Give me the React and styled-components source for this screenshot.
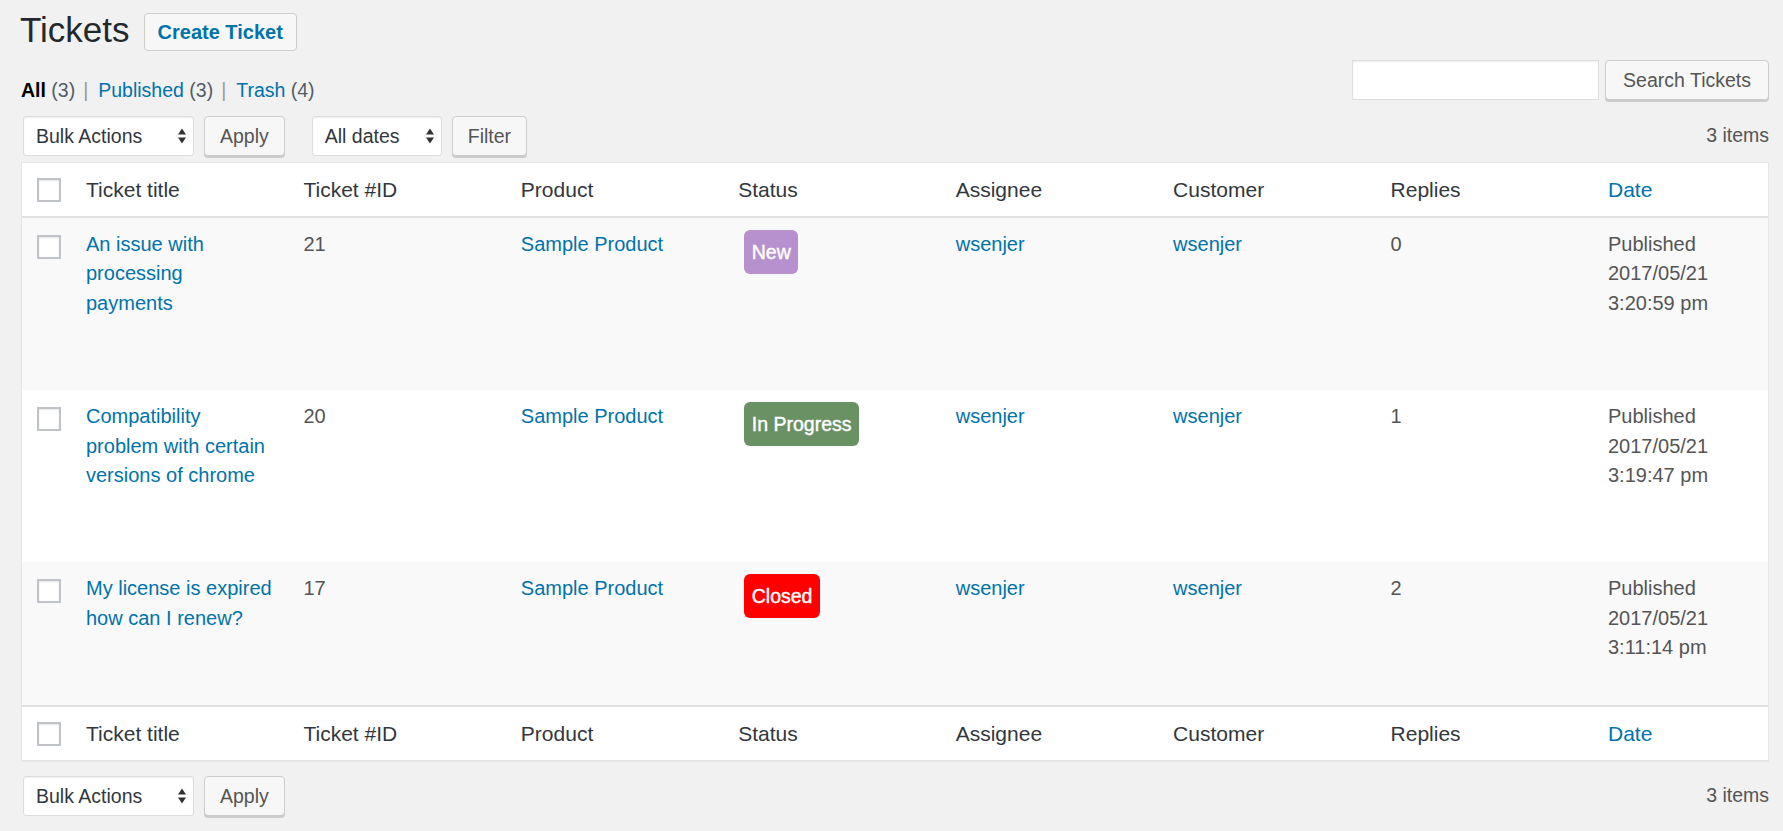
import React from "react";
import styled, { createGlobalStyle } from "styled-components";

const Global = createGlobalStyle`
  *, *::before, *::after { box-sizing: border-box; }
  html, body { margin: 0; padding: 0; }
  body {
    background: #f1f1f1;
    font-family: "Liberation Sans", Arial, Helvetica, sans-serif;
    color: #444;
  }
`;

const Page = styled.div`
  padding: 0 14px 20px 21px;
`;

const TitleRow = styled.div`
  display: flex;
  align-items: flex-start;
`;

const Heading = styled.h1`
  margin: 8px 14px 0 -1px;
  font-size: 35px;
  line-height: 44px;
  font-weight: 400;
  color: #23282d;
`;

const TitleAction = styled.a`
  margin-top: 13px;
  height: 38px;
  padding: 0 13px;
  display: inline-flex;
  align-items: center;
  border: 1px solid #ccc;
  border-radius: 4px;
  background: #f7f7f7;
  color: #0073aa;
  font-size: 20px;
  font-weight: 700;
  text-decoration: none;
`;

const SubRow = styled.div`
  display: flex;
  justify-content: space-between;
  align-items: flex-start;
`;

const Views = styled.ul`
  list-style: none;
  margin: 24px 0 0 0;
  padding: 0;
  display: flex;
  font-size: 19.5px;
  line-height: 28px;
  color: #555d66;
`;

const ViewItem = styled.li`
  display: flex;
  white-space: pre;
`;

const ViewLink = styled.a`
  color: ${(p) => (p.$current ? "#000" : "#0073aa")};
  font-weight: ${(p) => (p.$current ? 700 : 400)};
  text-decoration: none;
`;

const ViewCount = styled.span`
  color: #555d66;
`;

const Sep = styled.span`
  margin: 0 10px 0 8px;
  color: #999;
`;

const SearchBox = styled.div`
  margin-top: 8px;
  display: flex;
  gap: 6px;
`;

const SearchInput = styled.input`
  width: 247px;
  height: 40px;
  border: 1px solid #ddd;
  border-radius: 0;
  background: #fff;
  box-shadow: inset 0 1px 2px rgba(0, 0, 0, 0.07);
  font-size: 19.5px;
  font-family: inherit;
  outline: none;
`;

const Button = styled.button`
  height: 40px;
  padding: 0 ${(p) => p.$px || 15}px;
  border: 1px solid #ccc;
  border-radius: 4px;
  background: #f7f7f7;
  box-shadow: 0 2px 0 #ccc;
  color: #555;
  font-family: inherit;
  font-size: 19.5px;
  line-height: 38px;
  cursor: pointer;
`;

const TableNav = styled.div`
  display: flex;
  align-items: flex-start;
  padding-left: 2px;
  margin: ${(p) => (p.$top ? "12px 0 5px" : "15px 0 0")};
  height: 41px;
`;

const Actions = styled.div`
  display: flex;
  gap: 10px;
  margin-right: 27px;
`;

const SelectBox = styled.div`
  width: ${(p) => p.$w}px;
  height: 40px;
  padding: 0 6px 0 12px;
  display: flex;
  align-items: center;
  justify-content: space-between;
  border: 1px solid #ddd;
  border-radius: 3px;
  background: #fff;
  box-shadow: inset 0 1px 2px rgba(0, 0, 0, 0.07);
  color: #32373c;
  font-size: 19.5px;
`;

const Count = styled.div`
  margin: 5px 0 0 auto;
  font-size: 19.5px;
  line-height: 28px;
  color: #555;
`;

const Table = styled.table`
  width: 100%;
  table-layout: fixed;
  border-collapse: separate;
  border-spacing: 0;
  border: 1px solid #e5e5e5;
  box-shadow: 0 1px 1px rgba(0, 0, 0, 0.04);
  background: #fff;
`;

const HeadCell = styled.th`
  width: ${(p) => (p.$w ? `${p.$w}px` : "auto")};
  padding: 12px 15px;
  text-align: left;
  font-weight: 400;
  font-size: 21px;
  line-height: 29px;
  color: ${(p) => (p.$sorted ? "#0073aa" : "#32373c")};
  border-bottom: ${(p) => (p.$foot ? "none" : "2px solid #e1e1e1")};
  border-top: ${(p) => (p.$foot ? "2px solid #e1e1e1" : "none")};
`;

const CheckHead = styled(HeadCell)`
  padding: 0 0 0 15px;
  vertical-align: middle;
`;

const Row = styled.tr`
  background: ${(p) => (p.$alt ? "#f9f9f9" : "#fff")};
`;

const Cell = styled.td`
  padding: 12px 15px 11px;
  vertical-align: top;
  font-size: 20px;
  line-height: 29.4px;
  color: #555;
`;

const TitleCell = styled(Cell)`
  padding-right: 14px;
`;

const CheckCell = styled(Cell)`
  padding: 17px 0 0 15px;
`;

const RowActions = styled.div`
  height: 61px;
`;

const Link = styled.a`
  color: #0073aa;
  text-decoration: none;
`;

const Checkbox = styled.span`
  display: block;
  width: 24px;
  height: 24px;
  border: 2px solid #bfc3c7;
  background: #fff;
  box-shadow: inset 0 1px 2px rgba(0, 0, 0, 0.1);
`;

const Badge = styled.span`
  display: inline-block;
  margin: 0 0 0 6px;
  height: 44px;
  padding: 0 7.5px;
  border-radius: 6px;
  background: ${(p) => p.$bg};
  color: #fff;
  font-size: 19.5px;
  line-height: 44px;
  -webkit-text-stroke: 0.4px #fff;
`;

const Arrows = () => (
  <svg width="10" height="18" viewBox="0 0 10 18" aria-hidden="true">
    <path d="M1 7.5 L5 1.5 L9 7.5 Z" fill="#333" />
    <path d="M1 10.5 L5 16.5 L9 10.5 Z" fill="#333" />
  </svg>
);

const tickets = [
  {
    title: "An issue with processing payments",
    id: 21,
    status: "New",
    color: "#b791ce",
    replies: 0,
    time: "3:20:59 pm",
  },
  {
    title: "Compatibility problem with certain versions of chrome",
    id: 20,
    status: "In Progress",
    color: "#6a9163",
    replies: 1,
    time: "3:19:47 pm",
  },
  {
    title: "My license is expired how can I renew?",
    id: 17,
    status: "Closed",
    color: "#ff0000",
    replies: 2,
    time: "3:11:14 pm",
  },
];

const HeaderCells = ({ foot }) => (
  <tr>
    <CheckHead $w={49} $foot={foot}>
      <Checkbox />
    </CheckHead>
    <HeadCell $foot={foot}>Ticket title</HeadCell>
    <HeadCell $foot={foot}>Ticket #ID</HeadCell>
    <HeadCell $foot={foot}>Product</HeadCell>
    <HeadCell $foot={foot}>Status</HeadCell>
    <HeadCell $foot={foot}>Assignee</HeadCell>
    <HeadCell $foot={foot}>Customer</HeadCell>
    <HeadCell $foot={foot}>Replies</HeadCell>
    <HeadCell $w={175} $foot={foot} $sorted>
      Date
    </HeadCell>
  </tr>
);

export default function App() {
  return (
    <Page>
      <Global />
      <TitleRow>
        <Heading>Tickets</Heading>
        <TitleAction href="#">Create Ticket</TitleAction>
      </TitleRow>
      <SubRow>
        <Views>
          <ViewItem>
            <ViewLink $current href="#">All</ViewLink>
            <ViewCount> (3)</ViewCount>
            <Sep>|</Sep>
          </ViewItem>
          <ViewItem>
            <ViewLink href="#">Published</ViewLink>
            <ViewCount> (3)</ViewCount>
            <Sep>|</Sep>
          </ViewItem>
          <ViewItem>
            <ViewLink href="#">Trash</ViewLink>
            <ViewCount> (4)</ViewCount>
          </ViewItem>
        </Views>
        <SearchBox>
          <SearchInput type="search" />
          <Button $px={17}>Search Tickets</Button>
        </SearchBox>
      </SubRow>
      <TableNav $top>
        <Actions>
          <SelectBox $w={171}>
            Bulk Actions
            <Arrows />
          </SelectBox>
          <Button>Apply</Button>
        </Actions>
        <Actions>
          <SelectBox $w={130}>
            All dates
            <Arrows />
          </SelectBox>
          <Button>Filter</Button>
        </Actions>
        <Count>3 items</Count>
      </TableNav>
      <Table>
        <thead>
          <HeaderCells />
        </thead>
        <tbody>
          {tickets.map((t, i) => (
            <Row key={t.id} $alt={i % 2 === 0}>
              <CheckCell>
                <Checkbox />
              </CheckCell>
              <TitleCell>
                <Link href="#">{t.title}</Link>
                <RowActions />
              </TitleCell>
              <Cell>{t.id}</Cell>
              <Cell>
                <Link href="#">Sample Product</Link>
              </Cell>
              <Cell>
                <Badge $bg={t.color}>{t.status}</Badge>
              </Cell>
              <Cell>
                <Link href="#">wsenjer</Link>
              </Cell>
              <Cell>
                <Link href="#">wsenjer</Link>
              </Cell>
              <Cell>{t.replies}</Cell>
              <Cell>
                Published
                <br />
                2017/05/21
                <br />
                {t.time}
              </Cell>
            </Row>
          ))}
        </tbody>
        <tfoot>
          <HeaderCells foot />
        </tfoot>
      </Table>
      <TableNav>
        <Actions>
          <SelectBox $w={171}>
            Bulk Actions
            <Arrows />
          </SelectBox>
          <Button>Apply</Button>
        </Actions>
        <Count>3 items</Count>
      </TableNav>
    </Page>
  );
}
